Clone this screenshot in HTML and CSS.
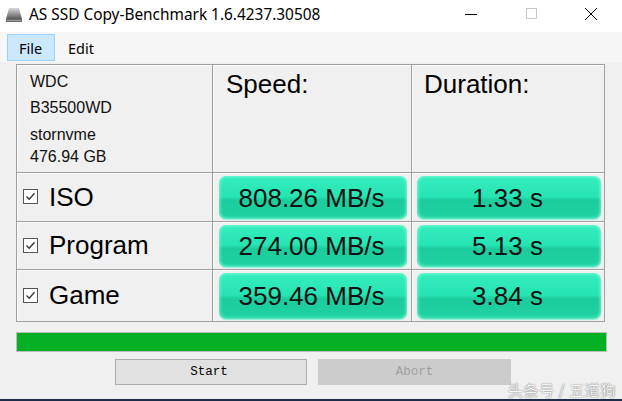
FILE: index.html
```html
<!DOCTYPE html>
<html>
<head>
<meta charset="utf-8">
<link rel="stylesheet" href="styles.css">
</head>
<body>
<div class="window">
  <div class="titlebar">
    <svg class="app-icon" width="18" height="16" viewBox="0 0 18 16">
      <defs>
        <linearGradient id="hd" x1="0" y1="0" x2="0" y2="1">
          <stop offset="0" stop-color="#d8d8d8"/>
          <stop offset="0.6" stop-color="#8c8c8c"/>
          <stop offset="1" stop-color="#5a5a5a"/>
        </linearGradient>
      </defs>
      <path d="M4 1 H14 L17 12 H1 Z" fill="url(#hd)"/>
      <rect x="1" y="12" width="16" height="3" fill="#6a6a6a"/>
      <rect x="2" y="13" width="14" height="1" fill="#9a9a9a"/>
    </svg>
    <span class="title">AS SSD Copy-Benchmark 1.6.4237.30508</span>
    <div class="win-controls">
      <span class="ctl"><svg width="14" height="14" viewBox="0 0 14 14"><path d="M1 7.5 H13" stroke="#000" stroke-width="1"/></svg></span>
      <span class="ctl"><svg width="14" height="14" viewBox="0 0 14 14"><rect x="2.5" y="1.5" width="10" height="10" fill="none" stroke="#c8c8c8" stroke-width="1"/></svg></span>
      <span class="ctl"><svg width="14" height="14" viewBox="0 0 14 14"><path d="M1 1 L13 13 M13 1 L1 13" stroke="#000" stroke-width="1"/></svg></span>
    </div>
  </div>
  <div class="menubar">
    <span class="menu-item active">File</span>
    <span class="menu-item">Edit</span>
  </div>
  <div class="main">
    <div class="grid">
      <div class="cell info">
        <div class="info-line l1">WDC</div>
        <div class="info-line l2">B35500WD</div>
        <div class="info-line l3">stornvme</div>
        <div class="info-line l4">476.94 GB</div>
      </div>
      <div class="cell head head-speed">Speed:</div>
      <div class="cell head head-dur">Duration:</div>

      <div class="cell label"><span class="chk"><svg width="11" height="11" viewBox="0 0 11 11"><path d="M1.5 5.5 L4.2 8.2 L9.5 2.2" fill="none" stroke="#333" stroke-width="1.3"/></svg></span>ISO</div>
      <div class="cell res-cell speed"><div class="res">808.26 MB/s</div></div>
      <div class="cell res-cell dur"><div class="res">1.33 s</div></div>

      <div class="cell label"><span class="chk"><svg width="11" height="11" viewBox="0 0 11 11"><path d="M1.5 5.5 L4.2 8.2 L9.5 2.2" fill="none" stroke="#333" stroke-width="1.3"/></svg></span>Program</div>
      <div class="cell res-cell speed"><div class="res">274.00 MB/s</div></div>
      <div class="cell res-cell dur"><div class="res">5.13 s</div></div>

      <div class="cell label"><span class="chk"><svg width="11" height="11" viewBox="0 0 11 11"><path d="M1.5 5.5 L4.2 8.2 L9.5 2.2" fill="none" stroke="#333" stroke-width="1.3"/></svg></span>Game</div>
      <div class="cell res-cell speed"><div class="res">359.46 MB/s</div></div>
      <div class="cell res-cell dur"><div class="res">3.84 s</div></div>
    </div>
    <div class="progress"><div class="progress-fill"></div></div>
    <div class="buttons">
      <button class="btn start">Start</button>
      <button class="btn abort">Abort</button>
    </div>
  </div>
  <div class="watermark">头条号 / 五道狗</div>
  <div class="taskbar-edge"></div>
</div>
</body>
</html>
```
FILE: styles.css
```css
* { box-sizing: border-box; }
html, body { margin: 0; padding: 0; }
body {
  width: 622px;
  height: 401px;
  overflow: hidden;
  background: #f0f0f0;
  font-family: "Liberation Sans", Arial, sans-serif;
}
.window {
  position: relative;
  width: 622px;
  height: 401px;
  display: flex;
  flex-direction: column;
  background: #f0f0f0;
}
.titlebar {
  height: 32px;
  background: #ffffff;
  display: flex;
  align-items: center;
  padding-left: 5px;
}
.app-icon { margin-top: -3px; }
.title {
  margin-left: 6px;
  margin-top: -3px;
  font-family: "Noto Sans", "Open Sans", sans-serif;
  font-size: 15.4px;
  color: #000;
}
.win-controls {
  margin-left: auto;
  display: flex;
  margin-right: 24px;
  margin-top: -4px;
  gap: 46px;
}
.ctl { display: flex; width: 14px; height: 14px; }
.menubar {
  height: 30px;
  background: #f7f7f7;
  display: flex;
  align-items: center;
  padding-left: 7px;
  gap: 0;
}
.menu-item {
  font-family: "Noto Sans", "Open Sans", sans-serif;
  font-size: 14.5px;
  color: #000;
  padding: 0 10px 0 12px;
  height: 27px;
  line-height: 26px;
  border: 1px solid transparent;
}
.menu-item.active {
  background: #cce8ff;
  border-color: #99d1ff;
  width: 48px;
  padding: 0 0 0 11px;
}
.main {
  flex: 1;
  padding: 2px 0 0 16px;
  display: flex;
  flex-direction: column;
}
.grid {
  width: 589px;
  display: grid;
  grid-template-columns: 195px 198px 192px;
  grid-template-rows: 107px 48px 47px 51px;
  gap: 1px;
  background: #a0a0a0;
  border: 1px solid #a0a0a0;
}
.cell {
  background: #f0f0f0;
  box-shadow: inset 1px 1px 0 #fafafa;
}
.info { padding: 7px 0 0 13px; font-size: 16px; color: #111; }
.info-line { line-height: 18px; }
.l1 { margin-top: 1px; }
.l2 { margin-top: 8px; }
.l3 { margin-top: 9px; }
.l4 { margin-top: 4px; }
.head {
  font-size: 26px;
  color: #000;
  line-height: 30px;
  padding-top: 4px;
}
.head-speed { padding-left: 13px; }
.head-dur { padding-left: 12px; }
.label {
  display: flex;
  align-items: center;
  padding-left: 6px;
  font-size: 26px;
  color: #000;
}
.chk {
  width: 15px;
  height: 15px;
  border: 1px solid #555;
  background: #fff;
  display: flex;
  align-items: center;
  justify-content: center;
  margin-right: 11px;
  margin-top: -1px;
}
.res-cell { display: flex; padding: 3px 4px 2px 6px; }
.res-cell.dur { padding: 3px 3px 2px 5px; }
.res {
  flex: 1;
  border-radius: 7px;
  background: linear-gradient(to bottom, #34edbd 0%, #27e4b3 48%, #1ccc9c 56%, #1fd3a3 100%);
  box-shadow: inset 0 0 3px 1px rgba(140, 255, 220, 0.75), 0 1px 1px rgba(120, 240, 205, 0.8);
  display: flex;
  align-items: center;
  justify-content: center;
  font-size: 26px;
  color: #111;
  padding-top: 1px;
  padding-right: 3px;
}
.progress {
  margin-top: 10px;
  width: 591px;
  height: 20px;
  border: 1px solid #bcbcbc;
  background: #e6e6e6;
}
.progress-fill { width: 100%; height: 100%; background: #06b025; }
.buttons {
  display: flex;
  gap: 11px;
  margin-top: 7px;
  padding-left: 99px;
}
.btn {
  width: 192px;
  height: 26px;
  font-family: "Liberation Mono", "Courier New", monospace;
  font-size: 12.5px;
  padding: 0;
  margin: 0;
}
.btn.start {
  background: #e1e1e1;
  border: 1px solid #adadad;
  color: #000;
  padding-right: 4px;
}
.btn.abort {
  width: 193px;
  background: #cccccc;
  border: 1px solid #cccccc;
  color: #a0a0a0;
}
.watermark {
  position: absolute;
  left: 508px;
  top: 379px;
  font-family: "Noto Sans CJK SC", sans-serif;
  font-size: 15px;
  color: #f4f4f4;
  text-shadow: 0 0 1px #777, 0 0 2px #999;
  letter-spacing: 0.6px;
}
.taskbar-edge {
  position: absolute;
  left: 0;
  bottom: 0;
  width: 622px;
  height: 2px;
  background: #1b2d48;
}
```
